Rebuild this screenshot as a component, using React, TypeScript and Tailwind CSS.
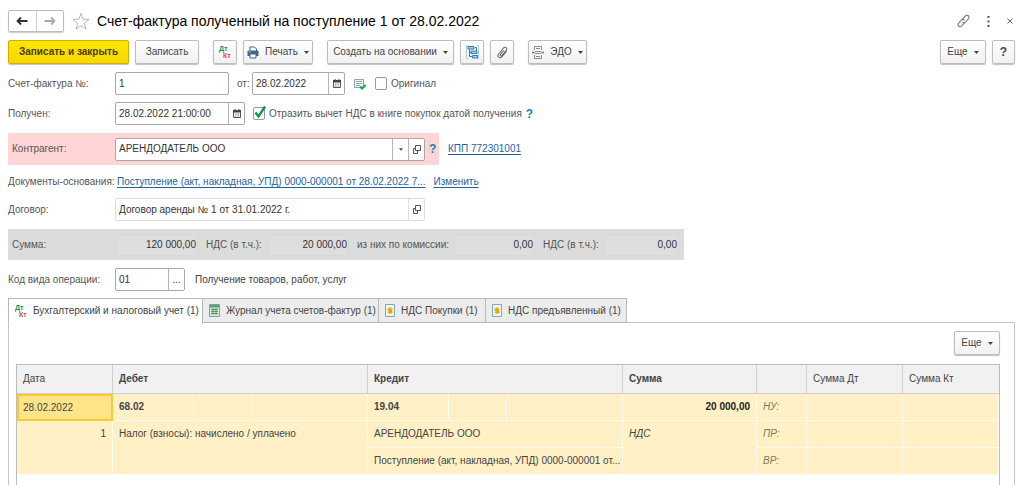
import { useState } from 'react';
import type { InputHTMLAttributes, ReactNode } from 'react';
import clsx from 'clsx';

interface ButtonProps {
    children: ReactNode;
    label?: string;
    className?: string;
    primary?: boolean;
    menu?: boolean;
}

function Button({ children, label, className, primary, menu }: ButtonProps) {
    return (
        <button
            type="button"
            aria-label={label}
            aria-haspopup={menu ? 'menu' : undefined}
            className={clsx(
                'flex h-6 shrink-0 items-center justify-center gap-[6px] rounded-xs border whitespace-nowrap shadow-[0_1px_1px_rgba(0,0,0,0.25)]',
                primary
                    ? 'border-[#d3ae00] bg-linear-to-b from-[#ffe600] to-[#f8d800] font-bold text-[#4a4000]'
                    : 'border-[#bdbdbd] bg-linear-to-b from-white to-[#f1f1f1] text-[#444]',
                className,
            )}
        >
            {children}
            {menu && <Caret />}
        </button>
    );
}

function Caret() {
    return (
        <svg viewBox="0 0 5 3" className="h-[3px] w-[5px] shrink-0" fill="#444" aria-hidden="true">
            <path d="M0 0h5L2.5 3z" />
        </svg>
    );
}

interface FieldProps extends InputHTMLAttributes<HTMLInputElement> {
    frame?: string;
    children?: ReactNode;
}

function Field({ frame = 'border-[#a9a9a9]', className, children, ...input }: FieldProps) {
    return (
        <div className={clsx('flex h-[23px] shrink-0 overflow-hidden rounded-xs border bg-white', frame, className)}>
            <input type="text" className="w-full min-w-0 flex-1 bg-transparent px-[3px] text-[#333] outline-none" {...input} />
            {children}
        </div>
    );
}

function FieldButton({ label, light, children }: { label: string; light?: boolean; children: ReactNode }) {
    return (
        <button
            type="button"
            aria-label={label}
            className={clsx(
                'flex w-4 shrink-0 items-center justify-center border-l text-[#444]',
                light ? 'border-[#ddd]' : 'border-[#b5b5b5]',
            )}
        >
            {children}
        </button>
    );
}

function ArrowIcon({ color, back }: { color: string; back?: boolean }) {
    return (
        <svg viewBox="0 0 12 10" className="h-[10px] w-3" fill="none" stroke={color} strokeWidth="1.8" aria-hidden="true">
            {back ? <path d="M11.5 5H1.5M5 1.5L1.5 5L5 8.5" /> : <path d="M.5 5h10M7 1.5L10.5 5L7 8.5" />}
        </svg>
    );
}

function DtKtIcon() {
    return (
        <svg viewBox="0 0 12 16" className="h-4 w-3 shrink-0 overflow-visible" aria-hidden="true">
            <text x="0" y="7" fontSize="7" fontWeight="bold" fill="#12935a">
                Дт
            </text>
            <text x="4" y="14" fontSize="7" fontWeight="bold" fill="#d8494c">
                Кт
            </text>
        </svg>
    );
}

function PrinterIcon() {
    return (
        <svg viewBox="0 0 12 13" className="h-[13px] w-3" aria-hidden="true">
            <path d="M3 5V1h4.500L9.500 3V5" fill="#fff" stroke="#3c678a" />
            <path d="M1.500 4.500h9l1 1V10H.500V5.500z" fill="#3c678a" />
            <path d="M3 8h6v4H3z" fill="#fff" stroke="#3c678a" />
            <path d="M2 6h1.500" stroke="#cfe0ec" />
        </svg>
    );
}

function StructureIcon() {
    return (
        <svg viewBox="0 0 13 14" className="h-[14px] w-[13px]" fill="none" aria-hidden="true">
            <path d="M3.500 4v7.500H6M3.500 7.500h2M9 2.500h1.500V6" stroke="#357fa8" />
            <path d="M2 1.500h6v2.500H2zM5 6h6v2.500H5zM6.500 10.500h5V13h-5z" fill="#9fd0e8" stroke="#357fa8" />
            <path d="M2.500.500H.500v13h2M10.500.500h2v13h-2" stroke="#8fb9cf" strokeWidth=".7" />
        </svg>
    );
}

function ClipIcon() {
    return (
        <svg viewBox="0 0 12 14" className="h-[13px] w-[11px]" fill="none" stroke="#6b6b6b" strokeWidth="1.100" aria-hidden="true">
            <path d="M10.500 5.500L5.500 11.500c-1.200 1.500-2.800 1.500-3.800.600s-1-2.300 0-3.500L7 2.200c.9-1.100 2.200-1.100 3-.400s.9 1.800 0 2.900L5.200 10.300c-.5.600-1.100.600-1.500.2s-.4-.9 0-1.400L7.500 4.500" />
        </svg>
    );
}

function EdoIcon() {
    return (
        <svg viewBox="0 0 12 13" className="h-[13px] w-3" fill="none" stroke="#8a8a8a" aria-hidden="true">
            <path d="M2.500 4V.500h7V4M2.500 9v3.500h7V9M4 2.500h4M3 5.500h6M3 7.500h6M4 10.500h4" />
            <path d="M0 6.500h3M9 6.500h3M1.500 5L0 6.500L1.500 8M10.500 5L12 6.500L10.500 8" />
        </svg>
    );
}

function LinkIcon() {
    return (
        <svg viewBox="0 0 14 14" className="h-[14px] w-[13px]" fill="none" stroke="#777" strokeWidth="1.200" strokeLinecap="round" aria-hidden="true">
            <path d="M6.200 4.800L8.800 1.800c1-1.100 2.400-1.200 3.400-.400s1 2.300 0 3.400L9.600 7.800c-1 1.100-2.400 1.200-3.300.300" />
            <path d="M7.800 9.200L5.200 12.200c-1 1.100-2.400 1.200-3.400.400s-1-2.300 0-3.400L4.400 6.200c1-1.100 2.400-1.200 3.300-.300" />
        </svg>
    );
}

function CalendarIcon() {
    return (
        <svg viewBox="0 0 8 9" className="h-[9px] w-2" aria-hidden="true">
            <path d="M.500 1.500h7v7h-7z" fill="#fff" stroke="#555" />
            <path d="M0 1h8v2.500H0zM1.500 0h1v2h-1zM5.500 0h1v2h-1z" fill="#444" />
            <path d="M2 5h4M2 7h4" stroke="#777" strokeDasharray="1 .5" />
        </svg>
    );
}

function OpenIcon() {
    return (
        <svg viewBox="0 0 8 9" className="h-[9px] w-2" fill="none" stroke="#555" aria-hidden="true">
            <path d="M2.500.500h5v5h-5z" />
            <path d="M2.500 3.500H.500v5h4v-3" />
        </svg>
    );
}

function PostedIcon() {
    return (
        <svg viewBox="0 0 12 12" className="h-3 w-3 shrink-0" fill="none" aria-hidden="true">
            <path d="M.500 1.500h9v8h-9z" fill="#f3f7f8" stroke="#92a3ab" />
            <path d="M2 3.500h6M2 5.500h6M2 7.500h4" stroke="#92a3ab" />
            <path d="M6 8.500l2 2L11.500 7" stroke="#14a14c" strokeWidth="2" />
        </svg>
    );
}

function JournalIcon() {
    return (
        <svg viewBox="0 0 11 13" className="h-[13px] w-[11px] shrink-0" fill="none" aria-hidden="true">
            <path d="M.500.500h10v12H.500z" fill="#d5ecdc" stroke="#7c9fae" />
            <path d="M1 1h9v2.500H1z" fill="#5b9f72" />
            <path d="M2 5.500h7M2 7.500h7M2 9.500h7M4 4v7M7 4v7" stroke="#3f8a5b" strokeWidth=".8" />
        </svg>
    );
}

function RegisterIcon() {
    return (
        <svg viewBox="0 0 10 13" className="h-[13px] w-[10px] shrink-0" aria-hidden="true">
            <path d="M.500.500h9v12h-9z" fill="#eef5fa" stroke="#83a5bb" />
            <path d="M2.500 4.500L5.500 3l2.500 2-1 1.500L8 8.500 5.500 10 2.500 9l1-1.500-1-1z" fill="#f0b90f" />
            <path d="M3.500 5.500L6 6.500M4 8.500l3-1" stroke="#b88408" strokeWidth=".7" />
        </svg>
    );
}

function CheckBox({ label, defaultChecked }: { label: string; defaultChecked?: boolean }) {
    return (
        <label className="flex shrink-0 items-center gap-1 whitespace-nowrap">
            <span className="relative flex">
                <input
                    type="checkbox"
                    defaultChecked={defaultChecked}
                    className="peer h-[13px] w-3 appearance-none rounded-xs border border-[#999] bg-white"
                />
                <svg
                    viewBox="0 0 13 14"
                    className="pointer-events-none absolute bottom-px left-px hidden h-[14px] w-[13px] peer-checked:block"
                    fill="none"
                    stroke="#0d9a4d"
                    strokeWidth="2.400"
                    aria-hidden="true"
                >
                    <path d="M1.500 7.500L4.500 11.500L11 1.500" />
                </svg>
            </span>
            {label}
        </label>
    );
}

function Hint() {
    return (
        <button type="button" aria-label="Подсказка" className="shrink-0 text-xs font-bold text-[#1b7fae]">
            ?
        </button>
    );
}

const totals = [
    { id: 'sum', label: 'Сумма:', value: '120 000,00', labelWidth: 'w-[103px]', width: 'w-[83px]' },
    { id: 'sum-vat', label: 'НДС (в т.ч.):', value: '20 000,00', labelWidth: 'w-[61px]', width: 'w-[82px]' },
    { id: 'fee', label: 'из них по комиссии:', value: '0,00', labelWidth: 'w-[96px]', width: 'w-[82px]' },
    { id: 'fee-vat', label: 'НДС (в т.ч.):', value: '0,00', labelWidth: 'w-[60px]', width: 'w-[76px]' },
];

const tabs = [
    { title: 'Бухгалтерский и налоговый учет (1)', icon: <DtKtIcon />, width: 'w-[195px]' },
    { title: 'Журнал учета счетов-фактур (1)', icon: <JournalIcon />, width: 'w-[177px]' },
    { title: 'НДС Покупки (1)', icon: <RegisterIcon />, width: 'w-[108px]' },
    { title: 'НДС предъявленный (1)', icon: <RegisterIcon />, width: 'w-[142px]' },
];

const labelCell = 'w-[107px] shrink-0 whitespace-nowrap';
const link = 'text-[#2463a0] underline underline-offset-2';
const head = 'border-r border-b border-[#cfcfcf] px-[6px] text-left';
const cell = 'border-r border-b border-[#fffbee] px-[6px]';

function EntriesTable() {
    return (
        <table className="w-full table-fixed border-separate border-spacing-0 text-[#444]">
            <colgroup>
                <col className="w-24" />
                <col className="w-[81px]" />
                <col className="w-[58px]" />
                <col className="w-[116px]" />
                <col className="w-[81px]" />
                <col className="w-[58px]" />
                <col className="w-[116px]" />
                <col className="w-[134px]" />
                <col className="w-[50px]" />
                <col className="w-24" />
                <col className="w-24" />
            </colgroup>
            <thead>
                <tr className="h-[29px] bg-[#f1f1f1]">
                    <th className={clsx(head, 'font-normal')}>Дата</th>
                    <th colSpan={3} className={head}>
                        Дебет
                    </th>
                    <th colSpan={3} className={head}>
                        Кредит
                    </th>
                    <th className={head}>Сумма</th>
                    <th className={head} />
                    <th className={clsx(head, 'font-normal')}>Сумма Дт</th>
                    <th className="border-b border-[#cfcfcf] px-[6px] text-left font-normal">Сумма Кт</th>
                </tr>
            </thead>
            <tbody className="bg-[#fff0c5]">
                <tr className="h-[27px]">
                    <td className="border-2 border-[#fcc92f] bg-[#ffe48a] px-1">28.02.2022</td>
                    <td className={clsx(cell, 'font-bold')}>68.02</td>
                    <td className={cell} />
                    <td className={cell} />
                    <td className={clsx(cell, 'font-bold')}>19.04</td>
                    <td className={cell} />
                    <td className={cell} />
                    <td className={clsx(cell, 'text-right font-bold text-[#222]')}>20 000,00</td>
                    <td className={clsx(cell, 'text-[#86795a] italic')}>НУ:</td>
                    <td className={cell} />
                    <td className={cell} />
                </tr>
                <tr className="h-[27px]">
                    <td rowSpan={2} className={clsx(cell, 'pt-[5px] text-right align-top')}>
                        1
                    </td>
                    <td rowSpan={2} colSpan={3} className={clsx(cell, 'pt-[5px] align-top')}>
                        Налог (взносы): начислено / уплачено
                    </td>
                    <td colSpan={3} className={cell}>
                        АРЕНДОДАТЕЛЬ ООО
                    </td>
                    <td rowSpan={2} className={clsx(cell, 'pt-[5px] align-top italic')}>
                        НДС
                    </td>
                    <td className={clsx(cell, 'text-[#86795a] italic')}>ПР:</td>
                    <td className={cell} />
                    <td className={cell} />
                </tr>
                <tr className="h-[27px]">
                    <td colSpan={3} className={clsx(cell, 'whitespace-nowrap')}>
                        Поступление (акт, накладная, УПД) 0000-000001 от...
                    </td>
                    <td className={clsx(cell, 'text-[#86795a] italic')}>ВР:</td>
                    <td className={cell} />
                    <td className={cell} />
                </tr>
            </tbody>
        </table>
    );
}

export default function App() {
    const [active, setActive] = useState(0);

    return (
        <main className="flex min-h-screen flex-col bg-white pt-[10px] pr-[9px] pl-2 font-['Liberation_Sans',Arial,sans-serif] text-[10px] leading-4 text-[#555]">
            <header className="flex h-[22px] items-center">
                <div className="flex h-[22px] w-14 shrink-0 rounded-xs border border-[#bdbdbd] shadow-[0_1px_1px_rgba(0,0,0,0.2)]">
                    <button type="button" aria-label="Назад" className="flex flex-1 items-center justify-center border-r border-[#ccc]">
                        <ArrowIcon color="#333" back />
                    </button>
                    <button type="button" aria-label="Вперед" className="flex flex-1 items-center justify-center">
                        <ArrowIcon color="#aaa" />
                    </button>
                </div>
                <button type="button" aria-label="В избранное" className="ml-2 shrink-0">
                    <svg viewBox="0 0 18 19" className="h-[19px] w-[18px]" fill="none" stroke="#b5b5b5" aria-hidden="true">
                        <path d="M9 1.500l2.100 5.700 6 .2-4.800 3.800 1.700 5.900-5-3.400-5 3.400 1.700-5.900L.900 7.400l6-.2z" />
                    </svg>
                </button>
                <h1 className="ml-[7px] flex-1 text-sm whitespace-nowrap text-black">
                    Счет-фактура полученный на поступление 1 от 28.02.2022
                </h1>
                <div className="flex items-center gap-[17px] pr-[2px]">
                    <button type="button" aria-label="Получить ссылку">
                        <LinkIcon />
                    </button>
                    <button type="button" aria-label="Дополнительно">
                        <svg viewBox="0 0 3 11" className="h-[11px] w-[3px]" fill="#555" aria-hidden="true">
                            <path d="M.500 0h2v2h-2zM.500 4.500h2v2h-2zM.500 9h2v2h-2z" />
                        </svg>
                    </button>
                    <button type="button" aria-label="Закрыть">
                        <svg viewBox="0 0 6 6" className="h-[6px] w-[6px]" stroke="#666" aria-hidden="true">
                            <path d="M.500.500l5 5M5.500.500l-5 5" />
                        </svg>
                    </button>
                </div>
            </header>

            <div className="mt-2 flex items-center">
                <Button primary className="w-[121px]">
                    Записать и закрыть
                </Button>
                <Button className="ml-[6px] w-16">Записать</Button>
                <Button label="Показать проводки" className="ml-[14px] w-6">
                    <DtKtIcon />
                </Button>
                <Button menu className="ml-[6px] w-[70px]">
                    <PrinterIcon />
                    Печать
                </Button>
                <Button menu className="ml-[14px] w-[127px]">
                    Создать на основании
                </Button>
                <Button label="Структура подчиненности" className="ml-[6px] w-6">
                    <StructureIcon />
                </Button>
                <Button label="Присоединенные файлы" className="ml-[6px] w-6">
                    <ClipIcon />
                </Button>
                <Button menu className="ml-[14px] w-[59px]">
                    <EdoIcon />
                    ЭДО
                </Button>
                <div className="ml-auto flex gap-[6px]">
                    <Button menu className="w-[46px]">
                        Еще
                    </Button>
                    <Button label="Справка" className="w-[23px] text-xs font-bold">
                        ?
                    </Button>
                </div>
            </div>

            <div className="mt-2 flex items-center">
                <label htmlFor="number" className={labelCell}>
                    Счет-фактура №:
                </label>
                <Field id="number" defaultValue="1" className="w-[114px]" />
                <label htmlFor="date" className="w-[23px] shrink-0 pl-2">
                    от:
                </label>
                <Field id="date" defaultValue="28.02.2022" className="w-[93px]">
                    <FieldButton label="Выбрать дату">
                        <CalendarIcon />
                    </FieldButton>
                </Field>
                <div className="ml-[9px] flex items-center gap-[9px]">
                    <PostedIcon />
                    <CheckBox label="Оригинал" />
                </div>
            </div>

            <div className="mt-[7px] flex items-center">
                <label htmlFor="received" className={labelCell}>
                    Получен:
                </label>
                <Field id="received" defaultValue="28.02.2022 21:00:00" className="mr-2 w-[130px]">
                    <FieldButton label="Выбрать дату получения">
                        <CalendarIcon />
                    </FieldButton>
                </Field>
                <CheckBox label="Отразить вычет НДС в книге покупок датой получения" defaultChecked />
                <div className="ml-1 flex">
                    <Hint />
                </div>
            </div>

            <div className="mt-2 flex items-center">
                <div className="flex h-8 w-[431px] shrink-0 items-center bg-[#ffd5d5] pl-1">
                    <label htmlFor="partner" className="w-[103px] shrink-0">
                        Контрагент:
                    </label>
                    <Field id="partner" defaultValue="АРЕНДОДАТЕЛЬ ООО" className="mr-1 w-[310px]">
                        <FieldButton label="Выбрать контрагента">
                            <svg viewBox="0 0 5 3" className="h-[3px] w-1" fill="#444" aria-hidden="true">
                                <path d="M0 0h5L2.500 3z" />
                            </svg>
                        </FieldButton>
                        <FieldButton label="Открыть контрагента">
                            <OpenIcon />
                        </FieldButton>
                    </Field>
                    <Hint />
                </div>
                <a href="#kpp" className={clsx(link, 'ml-[9px]')}>
                    КПП 772301001
                </a>
            </div>

            <div className="mt-[9px] flex items-center">
                <span className="w-[109px] shrink-0 whitespace-nowrap">Документы-основания:</span>
                <a href="#basis" className={clsx(link, 'mr-2 whitespace-nowrap')}>
                    Поступление (акт, накладная, УПД) 0000-000001 от 28.02.2022 7...
                </a>
                <a href="#edit" className={link}>
                    Изменить
                </a>
            </div>

            <div className="mt-2 flex items-center">
                <label htmlFor="contract" className={labelCell}>
                    Договор:
                </label>
                <Field
                    id="contract"
                    readOnly
                    defaultValue="Договор аренды № 1 от 31.01.2022 г."
                    frame="border-[#dcdcdc]"
                    className="w-[310px]"
                >
                    <FieldButton label="Открыть договор" light>
                        <OpenIcon />
                    </FieldButton>
                </Field>
            </div>

            <div className="mt-2 flex h-[31px] w-[676px] items-center gap-2 bg-[#dcdcdc] pl-1">
                {totals.map((total) => (
                    <div key={total.id} className="flex shrink-0 items-center">
                        <label htmlFor={total.id} className={clsx(total.labelWidth, 'whitespace-nowrap')}>
                            {total.label}
                        </label>
                        <input
                            id={total.id}
                            type="text"
                            readOnly
                            defaultValue={total.value}
                            className={clsx(
                                total.width,
                                'h-[22px] rounded-xs border border-[#d8d8d8] bg-[#dedede] px-px text-right text-[#333] outline-none',
                            )}
                        />
                    </div>
                ))}
            </div>

            <div className="mt-2 flex items-center">
                <label htmlFor="operation" className={labelCell}>
                    Код вида операции:
                </label>
                <Field id="operation" defaultValue="01" className="mr-[10px] w-[70px]">
                    <FieldButton label="Выбрать код">...</FieldButton>
                </Field>
                <span className="text-[#444]">Получение товаров, работ, услуг</span>
            </div>

            <div role="tablist" className="mt-[7px] flex h-[25px]">
                {tabs.map((tab, i) => (
                    <button
                        key={tab.title}
                        type="button"
                        role="tab"
                        aria-selected={active === i}
                        onClick={() => setActive(i)}
                        className={clsx(
                            'z-10 -mr-px flex shrink-0 items-center gap-[6px] border border-[#b8b8b8] pl-[6px] whitespace-nowrap text-[#444]',
                            tab.width,
                            active === i ? '-mb-px border-b-white bg-white' : 'bg-[#ececec]',
                        )}
                    >
                        {tab.icon}
                        {tab.title}
                    </button>
                ))}
            </div>
            <section role="tabpanel" className="-mt-px flex flex-1 flex-col border border-b-0 border-[#c4c4c4] px-[7px] pt-2">
                <div className="flex justify-end pr-[7px]">
                    <Button menu className="w-[46px]">
                        Еще
                    </Button>
                </div>
                <div className="mt-[9px] mr-[7px] flex-1 border border-b-0 border-[#bdbdbd]">
                    <EntriesTable />
                </div>
            </section>
        </main>
    );
}
